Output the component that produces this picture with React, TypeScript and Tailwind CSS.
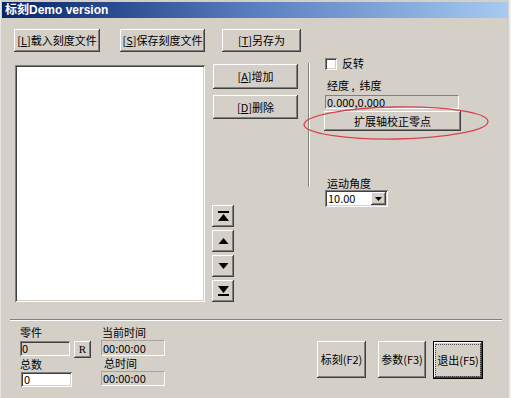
import type { ReactNode } from 'react'
import clsx from 'clsx'

const raised =
  'bg-[#d4d0c8] shadow-[inset_-1px_-1px_0_#404040,inset_1px_1px_0_#ffffff,inset_-2px_-2px_0_#808080,inset_2px_2px_0_#d4d0c8]'
const sunken =
  'shadow-[inset_1px_1px_0_#808080,inset_-1px_-1px_0_#ffffff,inset_2px_2px_0_#404040,inset_-2px_-2px_0_#d4d0c8]'
const staticEdge = 'border border-t-[#a8a49c] border-l-[#a8a49c] border-b-white border-r-white'

function Btn({ className, children }: { className?: string; children?: ReactNode }) {
  return (
    <div className={clsx('flex items-center justify-center shrink-0 whitespace-nowrap', raised, className)}>
      {children}
    </div>
  )
}

function NavIcon({ kind }: { kind: 'top' | 'up' | 'down' | 'bottom' }) {
  return (
    <svg width="11" height="10" viewBox="0 0 11 10">
      {kind === 'top' && (
        <>
          <rect x="0" y="0" width="11" height="2" fill="#000" />
          <polygon points="0,10 5.5,3 11,10" fill="#000" />
        </>
      )}
      {kind === 'up' && <polygon points="0.5,8 5.5,2 10.5,8" fill="#000" />}
      {kind === 'down' && <polygon points="0.5,2 5.5,8 10.5,2" fill="#000" />}
      {kind === 'bottom' && (
        <>
          <polygon points="0,0 5.5,7 11,0" fill="#000" />
          <rect x="0" y="8" width="11" height="2" fill="#000" />
        </>
      )}
    </svg>
  )
}

export default function App() {
  return (
    <div className="w-[511px] h-[398px] bg-[#eeeeec] overflow-hidden">
      <div className="relative w-[509px] h-[398px] bg-[#d4d0c8] pt-[2px] border-l border-[#e8e6e0] text-[11px] leading-[13px] text-black font-['Noto_Sans_CJK_SC',sans-serif]">
        {/* Title bar */}
        <div className="h-[16px] mx-[1px] flex items-center pl-[3px] bg-linear-to-r from-[#0a246a] via-[#5a7fc0] to-[#a6caf0]">
          <span className="text-white font-bold text-[12px] leading-[16px] font-['Liberation_Sans','Noto_Sans_CJK_SC',sans-serif]">
            标刻Demo version
          </span>
        </div>

        {/* File buttons */}
        <div className="flex mt-[11px] pl-[13px]">
          <Btn className="w-[86px] h-[23px]">
            [<u>L</u>]载入刻度文件
          </Btn>
          <Btn className="w-[85px] h-[23px] ml-[20px]">
            [<u>S</u>]保存刻度文件
          </Btn>
          <Btn className="w-[79px] h-[23px] ml-[17px]">
            [<u>T</u>]另存为
          </Btn>
        </div>

        {/* Main area */}
        <div className="flex items-start mt-[5px] pl-[14px]">
          <div className={clsx('mt-[8px] w-[190px] h-[237px] bg-white', sunken)} />

          <div className="ml-[7px] w-[86px] flex flex-col">
            <Btn className="mt-[7px] ml-[1px] w-[85px] h-[25px]">
              [<u>A</u>]增加
            </Btn>
            <Btn className="mt-[6px] ml-[1px] w-[85px] h-[24px]">
              [<u>D</u>]删除
            </Btn>
            <div className="mt-[86px] flex flex-col gap-[3px]">
              <Btn className="w-[22px] h-[22px]">
                <NavIcon kind="top" />
              </Btn>
              <Btn className="w-[22px] h-[22px]">
                <NavIcon kind="up" />
              </Btn>
              <Btn className="w-[22px] h-[22px]">
                <NavIcon kind="down" />
              </Btn>
              <Btn className="w-[22px] h-[22px]">
                <NavIcon kind="bottom" />
              </Btn>
            </div>
          </div>

          {/* Vertical separator */}
          <div className="ml-[10px] mt-[6px] h-[124px] w-[2px] border-l border-r border-l-[#808080] border-r-white" />

          {/* Right panel */}
          <div className="ml-[15px] flex flex-col">
            <div className="flex items-center h-[13px]">
              <div className={clsx('w-[12px] h-[12px] bg-white', sunken)} />
              <span className="ml-[5px]">反转</span>
            </div>
            <div className="mt-[9px] ml-[2px] h-[14px] whitespace-pre">经度 ,  纬度</div>
            <div className="mt-[2px] w-[134px] h-[14px] border-t border-l border-[#808080] border-b-white border-r-white border-b border-r leading-[12px] pl-[1px]">
              0.000,0.000
            </div>
            <Btn className="mt-[2px] -ml-[1px] w-[137px] h-[20px]">扩展轴校正零点</Btn>
            <div className="mt-[46px] ml-[2px] h-[12px] leading-[12px]">运动角度</div>
            <div className={clsx('mt-[1px] w-[63px] h-[17px] bg-white flex items-center pl-[3px] pr-[2px]', sunken)}>
              <span className="flex-1">10.00</span>
              <Btn className="w-[15px] h-[13px]">
                <svg width="7" height="4" viewBox="0 0 7 4">
                  <polygon points="0,0 7,0 3.5,4" fill="#000" />
                </svg>
              </Btn>
            </div>
          </div>
        </div>

        {/* Bottom separator */}
        <div className="mt-[17px] ml-[9px] w-[492px] h-[2px] border-t border-b border-t-[#808080] border-b-white" />

        {/* Bottom area */}
        <div className="flex items-start pl-[19px]">
          <div className="flex flex-col w-[71px]">
            <div className="mt-[5px] h-[14px] leading-[12px]">零件</div>
            <div className="mt-[1px] flex items-start">
              <div className={clsx('w-[50px] h-[15px] pl-[2px] flex items-center leading-[11px]', sunken)}>0</div>
              <Btn className="ml-[4px] w-[17px] h-[17px] font-['Liberation_Serif',serif]">R</Btn>
            </div>
            <div className="mt-[1px] h-[13px] leading-[11px]">总数</div>
            <div className={clsx('ml-[1px] w-[51px] h-[15px] bg-white pl-[3px] flex items-center leading-[11px]', sunken)}>
              0
            </div>
          </div>

          <div className="flex flex-col ml-[10px] w-[64px]">
            <div className="mt-[5px] h-[14px] pl-[1px] leading-[12px]">当前时间</div>
            <div className={clsx('w-[64px] h-[16px] pl-[1px] flex items-center leading-[11px]', staticEdge)}>00:00:00</div>
            <div className="mt-[2px] h-[13px] leading-[11px] pl-[3px]">总时间</div>
            <div className={clsx('w-[64px] h-[15px] pl-[1px] flex items-center leading-[11px]', staticEdge)}>00:00:00</div>
          </div>

          <div className="flex ml-[152px] mt-[20px]">
            <Btn className="w-[49px] h-[37px]">标刻(F2)</Btn>
            <Btn className="ml-[12px] w-[48px] h-[37px]">参数(F3)</Btn>
            <div className="ml-[7px] w-[50px] h-[38px] border border-black">
              <Btn className="w-full h-full">
                <span className="border border-dotted border-[#404040] px-[1px] py-[10px] leading-[11px]">退出(F5)</span>
              </Btn>
            </div>
          </div>
        </div>

        {/* Red annotation ellipse over the button */}
        <svg className="absolute left-[302px] top-[105px] pointer-events-none" width="188" height="36" viewBox="0 0 188 36">
          <ellipse cx="93" cy="18" rx="92" ry="16" fill="none" stroke="#d8434f" strokeWidth="1.3" transform="rotate(-1 93 18)" />
        </svg>
      </div>
    </div>
  )
}
